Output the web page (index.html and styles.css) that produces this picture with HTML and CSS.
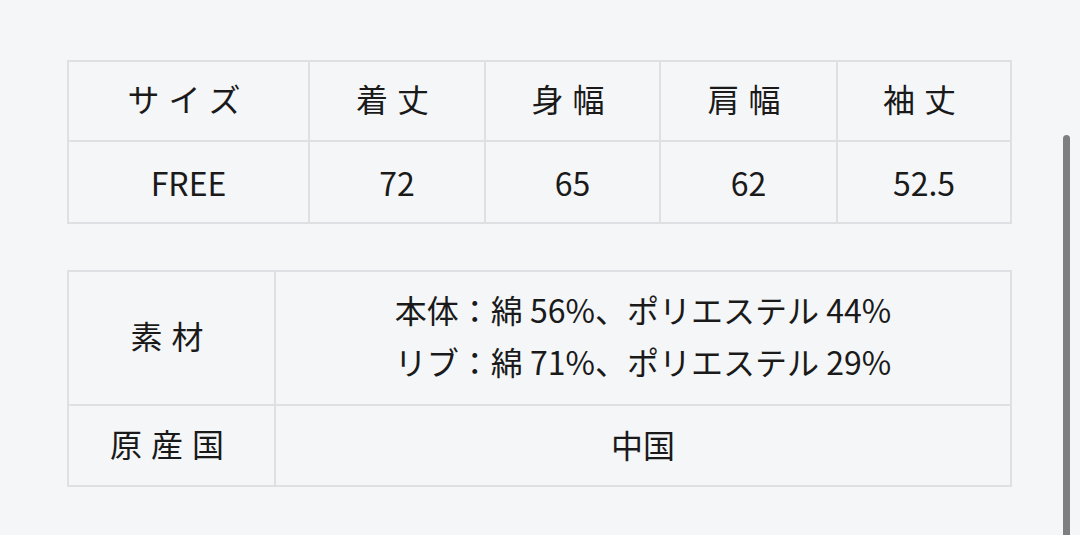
FILE: index.html
```html
<!DOCTYPE html>
<html lang="ja">
<head>
<meta charset="utf-8">
<link rel="stylesheet" href="styles.css">
</head>
<body>
<main class="page">
  <table class="tbl size">
    <colgroup>
      <col class="c1"><col class="c2"><col class="c3"><col class="c4"><col class="c5">
    </colgroup>
    <tr class="head">
      <th class="sp">サイズ</th>
      <th class="sp">着丈</th>
      <th class="sp">身幅</th>
      <th class="sp">肩幅</th>
      <th class="sp">袖丈</th>
    </tr>
    <tr class="vals">
      <td>FREE</td>
      <td>72</td>
      <td>65</td>
      <td>62</td>
      <td>52.5</td>
    </tr>
  </table>

  <table class="tbl info">
    <colgroup>
      <col class="k"><col class="v">
    </colgroup>
    <tr class="mat">
      <th class="sp">素材</th>
      <td>
        <div class="line">本体：綿 56%、ポリエステル 44%</div>
        <div class="line">リブ：綿 71%、ポリエステル 29%</div>
      </td>
    </tr>
    <tr class="origin">
      <th class="sp">原産国</th>
      <td>中国</td>
    </tr>
  </table>
</main>
<div class="scrollbar"></div>
</body>
</html>
```

FILE: styles.css
```css
html, body {
  margin: 0;
  padding: 0;
  background: #f5f6f8;
}
body {
  width: 1080px;
  height: 535px;
  overflow: hidden;
  font-family: "Noto Sans CJK JP", "Noto Sans", sans-serif;
  color: #1a1a1a;
}
.page {
  padding: 60px 0 0 67px;
  display: flex;
  flex-direction: column;
  gap: 46px;
}
.tbl {
  border-collapse: separate;
  border-spacing: 0;
  width: 945px;
  table-layout: fixed;
  border-top: 2px solid #dfe0e3;
  border-left: 2px solid #dfe0e3;
}
.tbl th, .tbl td {
  border-right: 2px solid #dfe0e3;
  border-bottom: 2px solid #dfe0e3;
  text-align: center;
  vertical-align: middle;
  font-weight: 400;
  font-size: 32px;
  padding: 0 0 6px;
}
.sp {
  letter-spacing: 9px;
}
.size .c1 { width: 241px; }
.size .c2 { width: 176px; }
.size .c3 { width: 175px; }
.size .c4 { width: 177px; }
.size .c5 { width: 174px; }
.size .head { height: 80px; }
.size .vals { height: 82px; }
.size .vals td { padding: 0; }
.info .k { width: 207px; }
.info .mat { height: 134px; }
.info .origin { height: 81px; }
.info .origin td { padding: 0 0 3px; }
.line {
  line-height: 52px;
}
.scrollbar {
  position: fixed;
  left: 1063px;
  top: 135px;
  width: 7px;
  height: 400px;
  background: #7f7f7f;
  border-radius: 4px 4px 0 0;
}
```
